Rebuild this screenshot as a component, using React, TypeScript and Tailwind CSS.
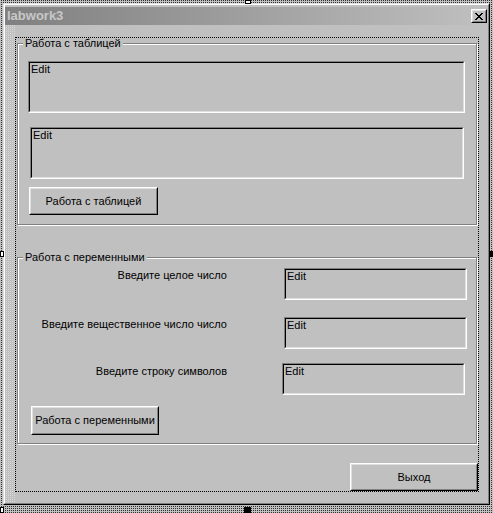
import React from 'react';

const font = "font-['Liberation_Sans',Arial,sans-serif]";

function Edit({ className }: { className: string }) {
  return (
    <div
      className={`border border-t-[#808080] border-l-[#808080] border-b-white border-r-white ${className}`}
    >
      <div className="h-full border border-t-black border-l-black border-b-[#dfdfdf] border-r-[#dfdfdf] pl-[1px] text-[11px] leading-[13px]">
        Edit
      </div>
    </div>
  );
}

function Button({ className, label }: { className: string; label: string }) {
  return (
    <div
      className={`border border-t-white border-l-white border-b-black border-r-black ${className}`}
    >
      <div className="flex h-full items-center justify-center border border-t-[#dfdfdf] border-l-[#dfdfdf] border-b-[#808080] border-r-[#808080] text-[11px] leading-[13px]">
        {label}
      </div>
    </div>
  );
}

function CloseGlyph() {
  const rows = ['XX....XX', '.XX..XX.', '..XXXX..', '...XX...', '..XXXX..', '.XX..XX.', 'XX....XX'];
  return (
    <svg width="8" height="7" viewBox="0 0 8 7" shapeRendering="crispEdges">
      {rows.map((row, y) =>
        row.split('').map((c, x) =>
          c === 'X' ? <rect key={`${x}-${y}`} x={x} y={y} width="1" height="1" fill="#000" /> : null
        )
      )}
    </svg>
  );
}

export default function App() {
  return (
    <div
      className={`relative h-[513px] w-[493px] overflow-hidden bg-[image:repeating-conic-gradient(#303030_0_25%,#c0c0c0_0_100%)] bg-size-[2px_2px] pl-[3px] pt-[3px] text-black ${font}`}
    >
      {/* selection handles */}
      <div className="absolute left-[245px] top-0 h-[4px] w-[6px] border border-black bg-white" />
      <div className="absolute left-[244px] top-[507px] h-[6px] w-[7px] bg-black" />
      <div className="absolute left-0 top-[251px] h-[6px] w-[4px] border border-black bg-white" />
      <div className="absolute left-[490px] top-[251px] h-[6px] w-[3px] bg-black" />
      <div className="absolute left-0 top-[507px] h-[6px] w-[4px] border border-black bg-white" />

      {/* window */}
      <div className="h-[502px] w-[487px] border border-t-[#dfdfdf] border-l-[#dfdfdf] border-b-black border-r-black">
        <div className="flex h-full flex-col border border-t-white border-l-white border-b-[#808080] border-r-[#808080] bg-[#c0c0c0] pt-[2px]">
          {/* title bar */}
          <div className="flex h-[18px] items-center justify-between bg-gradient-to-r from-[#808080] to-[#c0c0c0] pl-[2px] pr-[1px]">
            <span className="text-[13px] font-bold leading-[14px] text-[#c8c8c8]">labwork3</span>
            <div className="h-[14px] w-[16px] border border-t-white border-l-white border-b-black border-r-black">
              <div className="flex h-full items-center justify-center border border-t-[#dfdfdf] border-l-[#dfdfdf] border-b-[#808080] border-r-[#808080] bg-[#c0c0c0]">
                <CloseGlyph />
              </div>
            </div>
          </div>

          {/* client area */}
          <div className="flex flex-1">
            <div className="w-[10px] bg-[image:repeating-conic-gradient(#dadada_0_25%,#c0c0c0_0_100%)] bg-size-[2px_2px]" />
            <div className="mt-[12px] flex h-[455px] w-[464px] flex-col border border-dotted border-black">
              {/* group 1 */}
              <fieldset className="ml-[1px] h-[187px] w-[460px] border border-[#808080] shadow-[inset_1px_1px_0_#fff,1px_1px_0_#fff]">
                <legend className="ml-[5px] bg-[#c0c0c0] px-[2px] text-[11px] leading-[11px]">
                  Работа с таблицей
                </legend>
                <Edit className="ml-[10px] mt-[12px] h-[52px] w-[437px]" />
                <Edit className="ml-[12px] mt-[14px] h-[52px] w-[434px]" />
                <Button className="ml-[11px] mt-[8px] h-[28px] w-[129px]" label="Работа с таблицей" />
              </fieldset>

              {/* group 2 */}
              <fieldset className="ml-[1px] mt-[27px] h-[192px] w-[460px] border border-[#808080] shadow-[inset_1px_1px_0_#fff,1px_1px_0_#fff]">
                <legend className="ml-[5px] bg-[#c0c0c0] px-[2px] text-[11px] leading-[11px]">
                  Работа с переменными
                </legend>
                <div className="mt-[5px] flex items-start">
                  <span className="mt-[1px] w-[209px] text-right text-[11px] leading-[13px]">Введите целое число</span>
                  <Edit className="ml-[57px] h-[32px] w-[183px]" />
                </div>
                <div className="mt-[17px] flex items-start">
                  <span className="mt-[1px] w-[209px] text-right text-[11px] leading-[13px]">
                    Введите вещественное число число
                  </span>
                  <Edit className="ml-[57px] h-[32px] w-[183px]" />
                </div>
                <div className="mt-[14px] flex items-start">
                  <span className="mt-[2px] w-[209px] text-right text-[11px] leading-[13px]">Введите строку символов</span>
                  <Edit className="ml-[55px] h-[32px] w-[183px]" />
                </div>
                <Button className="ml-[13px] mt-[11px] h-[29px] w-[128px]" label="Работа с переменными" />
              </fieldset>

              <div className="mt-[19px] flex justify-end">
                <Button className="h-[28px] w-[128px]" label="Выход" />
              </div>
            </div>
          </div>
        </div>
      </div>
    </div>
  );
}
